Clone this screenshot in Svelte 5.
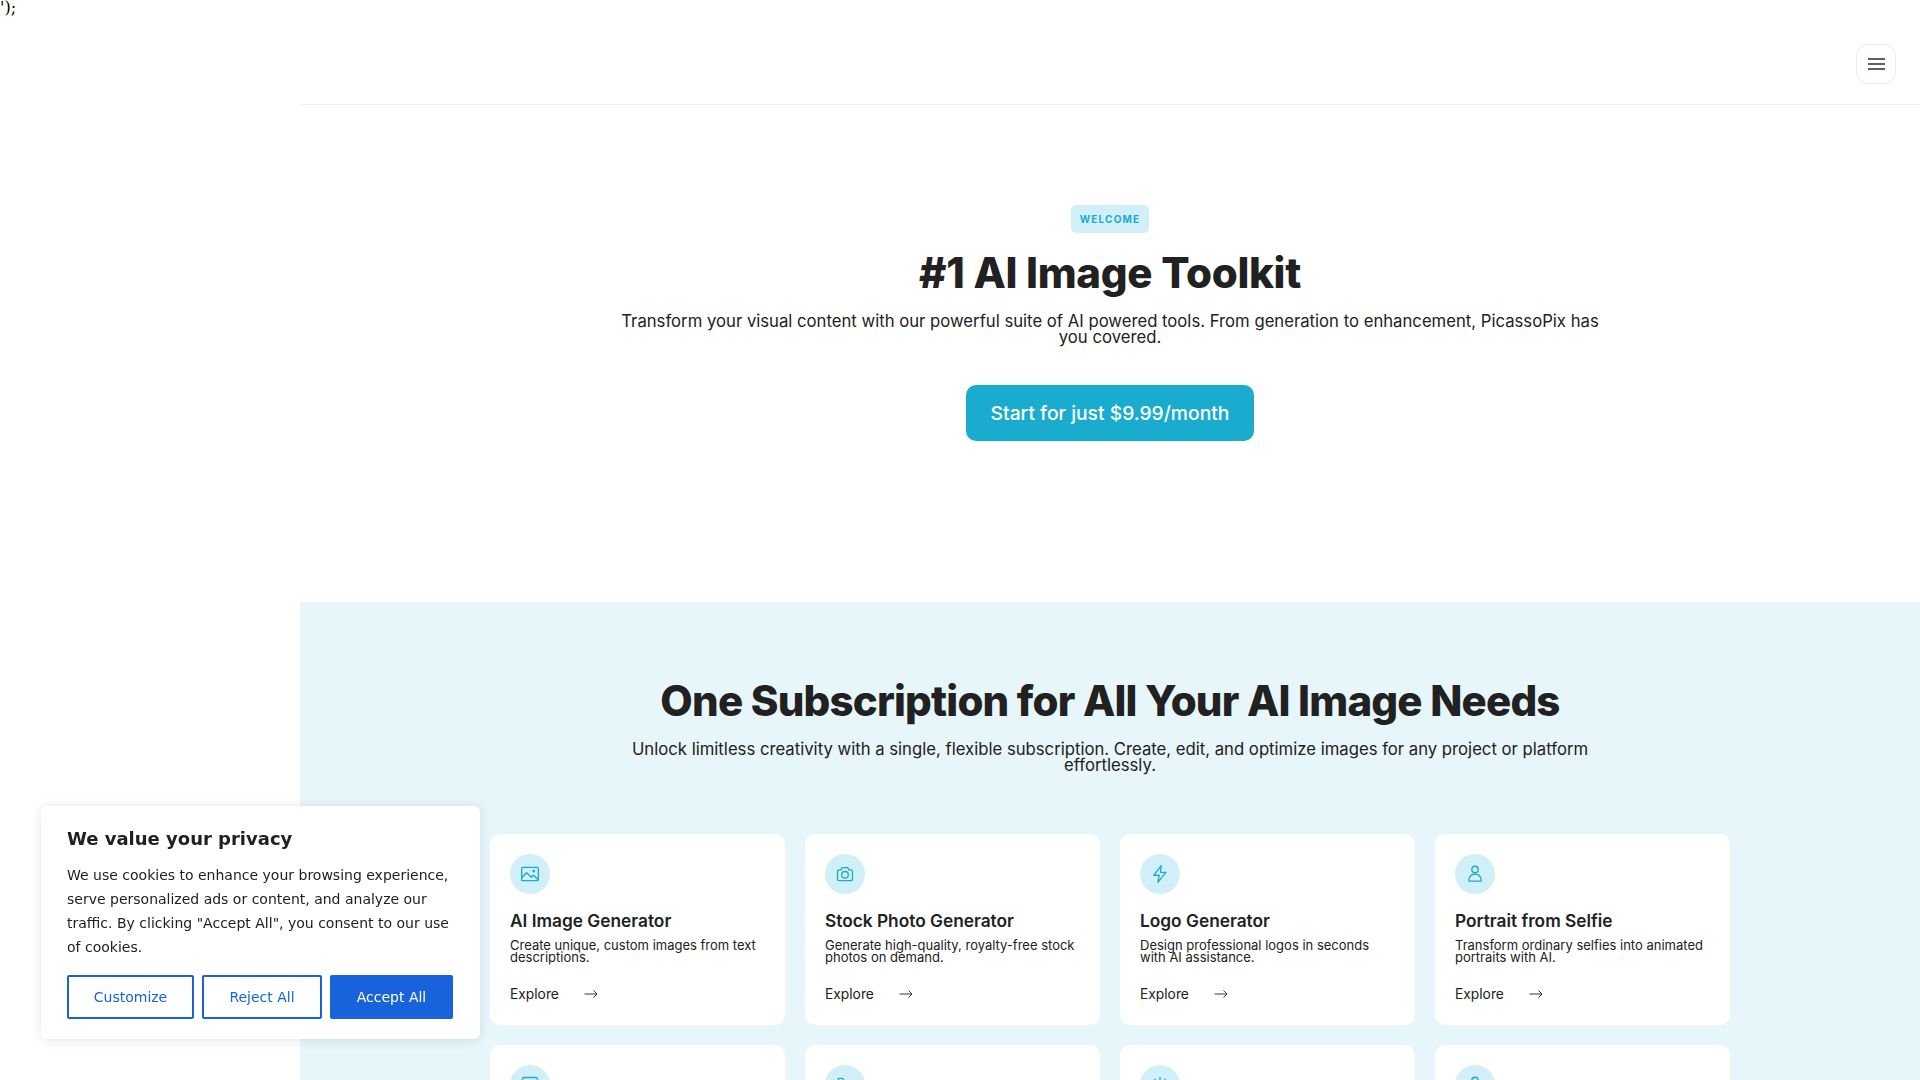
<script lang="ts">
  const tools = [
    { id: 'image', title: 'AI Image Generator', desc: 'Create unique, custom images from text descriptions.' },
    { id: 'camera', title: 'Stock Photo Generator', desc: 'Generate high-quality, royalty-free stock photos on demand.' },
    { id: 'bolt', title: 'Logo Generator', desc: 'Design professional logos in seconds with AI assistance.' },
    { id: 'user', title: 'Portrait from Selfie', desc: 'Transform ordinary selfies into animated portraits with AI.' },
    { id: 'card', title: '', desc: '' },
    { id: 'folder', title: '', desc: '' },
    { id: 'bars', title: '', desc: '' },
    { id: 'user', title: '', desc: '' }
  ];
</script>

<div class="page">
  <aside class="sidebar">');</aside>

  <main class="main">
    <header class="topbar">
      <button class="menu-btn" aria-label="Menu">
        <span></span><span></span><span></span>
      </button>
    </header>

    <section class="hero">
      <span class="badge">WELCOME</span>
      <h1>#1 AI Image Toolkit</h1>
      <p class="hero-text">Transform your visual content with our powerful suite of AI powered tools. From generation to enhancement, PicassoPix has you covered.</p>
      <button class="cta">Start for just $9.99/month</button>
    </section>

    <section class="features">
      <h2>One Subscription for All Your AI Image Needs</h2>
      <p class="features-text">Unlock limitless creativity with a single, flexible subscription. Create, edit, and optimize images for any project or platform effortlessly.</p>

      <div class="grid">
        {#each tools as tool}
          <article class="card">
            <div class="icon">
              <svg viewBox="0 0 24 24" width="20" height="20" fill="none" stroke="currentColor" stroke-width="1.6" stroke-linecap="round" stroke-linejoin="round">
                {#if tool.id === 'image'}
                  <rect x="2" y="4" width="20" height="16" rx="1" />
                  <path d="M2 16.5l6-6 5.5 5.5 2.5-2.5 6 5.5" />
                  <circle cx="16.5" cy="8.5" r="1" />
                {:else if tool.id === 'camera'}
                  <path d="M3 9a2 2 0 0 1 2-2h2.2l1.6-2.6h6.4L16.800 7H19a2 2 0 0 1 2 2v9a2 2 0 0 1-2 2H5a2 2 0 0 1-2-2z" />
                  <circle cx="12" cy="13" r="4" />
                {:else if tool.id === 'bolt'}
                  <path d="M13.500 2 4.500 13.500h6.500L9.500 22l9.500-12h-6.500z" />
                {:else if tool.id === 'user'}
                  <circle cx="12" cy="6.500" r="3.800" />
                  <path d="M4.500 20.500v-1a7.500 7.500 0 0 1 15 0v.2a.8.800 0 0 1-.8.8H5.300a.8.800 0 0 1-.8-.8z" />
                {:else if tool.id === 'card'}
                  <rect x="3" y="3" width="18" height="18" rx="2" />
                  <path d="M3 8h18" />
                {:else if tool.id === 'folder'}
                  <path d="M4 4h5l2 3h9v13H4z" />
                {:else}
                  <path d="M6 5v14M12 3v16M18 5v14" />
                {/if}
              </svg>
            </div>
            {#if tool.title}
              <h3>{tool.title}</h3>
              <p>{tool.desc}</p>
              <a class="explore" href="#top">
                Explore
                <svg viewBox="0 0 14 10" width="14" height="10" fill="none" stroke="currentColor" stroke-width="0.9">
                  <path d="M0.500 5h12.500M9.500 1.500 13 5 9.500 8.500" />
                </svg>
              </a>
            {/if}
          </article>
        {/each}
      </div>
    </section>
  </main>
</div>

<div class="cookie">
  <h4>We value your privacy</h4>
  <p>We use cookies to enhance your browsing experience, serve personalized ads or content, and analyze our traffic. By clicking "Accept All", you consent to our use of cookies.</p>
  <div class="cookie-actions">
    <button class="outline customize">Customize</button>
    <button class="outline reject">Reject All</button>
    <button class="solid">Accept All</button>
  </div>
</div>

<style>
  :global(body) {
    margin: 0;
    background: #fff;
    color: #212121;
    font-family: Inter, "Noto Sans", sans-serif;
  }

  .page {
    display: grid;
    grid-template-columns: 300px 1fr;
    height: 1080px;
    overflow: hidden;
  }

  .sidebar {
    font-family: "DejaVu Serif", serif;
    font-size: 16px;
    line-height: 16px;
    color: #000;
  }

  .topbar {
    display: flex;
    justify-content: flex-end;
    padding: 44px 24px 20px;
    border-bottom: 1px solid #f1f2f4;
  }

  .menu-btn {
    width: 40px;
    height: 40px;
    border: 1px solid #ebecf0;
    border-radius: 12px;
    background: #fff;
    display: flex;
    flex-direction: column;
    align-items: center;
    justify-content: center;
    gap: 3px;
    padding: 0;
  }

  .menu-btn span {
    display: block;
    width: 17px;
    height: 2px;
    background: #5b6075;
  }

  .hero {
    display: flex;
    flex-direction: column;
    align-items: center;
    padding: 100px 0 161px;
    text-align: center;
  }

  .badge {
    display: flex;
    align-items: center;
    justify-content: center;
    width: 78px;
    height: 28px;
    border-radius: 5px;
    background: #d1eff6;
    color: #1aaccf;
    font-size: 10px;
    font-weight: 700;
    letter-spacing: 1.2px;
  }

  h1 {
    margin: 12px 0 0;
    font-size: 42px;
    line-height: 56px;
    font-weight: 800;
    letter-spacing: -0.3px;
  }

  .hero-text {
    margin: 12px 0 0;
    width: 1000px;
    font-size: 16.7px;
    line-height: 16px;
    font-weight: 400;
    color: #212121;
  }

  .cta {
    margin-top: 40px;
    width: 288px;
    height: 56px;
    border: 0;
    border-radius: 10px;
    background: #1aaccf;
    color: #fff;
    font-family: inherit;
    font-size: 19.3px;
    font-weight: 500;
  }

  .features {
    background: #e6f6fa;
    padding: 71px 190px 0;
    text-align: center;
  }

  h2 {
    margin: 0;
    font-size: 42px;
    line-height: 56px;
    font-weight: 800;
    letter-spacing: -0.8px;
  }

  .features-text {
    margin: 12px auto 0;
    width: 980px;
    font-size: 16.7px;
    line-height: 16px;
  }

  .grid {
    display: grid;
    grid-template-columns: repeat(4, 295px);
    gap: 20px;
    margin-top: 61px;
    text-align: left;
  }

  .card {
    background: #fff;
    border-radius: 10px;
    padding: 20px;
    height: 191px;
    box-sizing: border-box;
  }

  .icon {
    width: 40px;
    height: 40px;
    border-radius: 50%;
    background: #d1eff6;
    color: #1aaccf;
    display: flex;
    align-items: center;
    justify-content: center;
  }

  h3 {
    margin: 15px 0 0;
    font-size: 17.3px;
    line-height: 24px;
    font-weight: 600;
  }

  .card p {
    margin: 6px 0 0;
    font-size: 13px;
    line-height: 12px;
  }

  .explore {
    display: flex;
    align-items: center;
    gap: 25px;
    margin-top: 21px;
    font-size: 13.8px;
    line-height: 20px;
    color: #212121;
    text-decoration: none;
  }

  .cookie {
    position: fixed;
    left: 41px;
    bottom: 41px;
    width: 439px;
    box-sizing: border-box;
    padding: 20px 26px 20px;
    background: #fff;
    border-radius: 6px;
    box-shadow: 0 1px 12px rgba(2, 32, 71, 0.12);
    font-family: "DejaVu Sans", sans-serif;
  }

  .cookie h4 {
    margin: 0;
    font-size: 18px;
    line-height: 26px;
    font-weight: 700;
    color: #212121;
  }

  .cookie p {
    margin: 11px 0 0;
    font-size: 14px;
    line-height: 24px;
    color: #212121;
  }

  .cookie-actions {
    display: flex;
    gap: 8px;
    margin-top: 16px;
  }

  .cookie button {
    height: 44px;
    border: 2px solid #1863dc;
    border-radius: 2px;
    font-family: inherit;
    font-size: 14px;
    padding: 0;
  }

  .outline {
    background: #fff;
    color: #1863dc;
  }

  .customize {
    width: 127px;
  }

  .reject {
    width: 120px;
  }

  .solid {
    width: 123px;
    background: #1863dc;
    color: #fff;
  }
</style>
